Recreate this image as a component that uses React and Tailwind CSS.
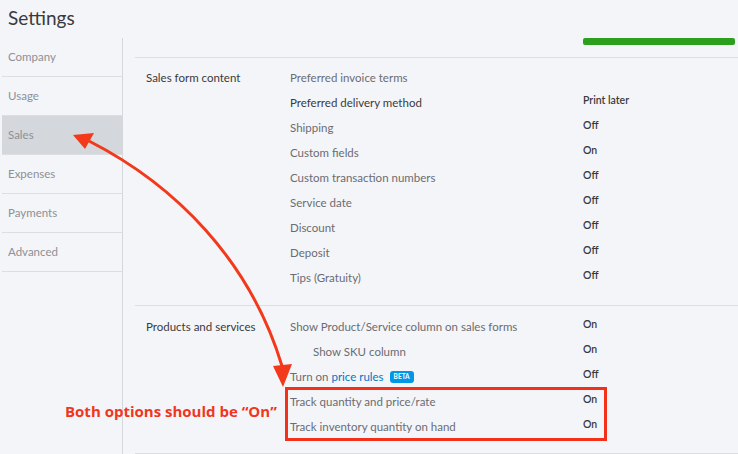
import React from 'react';

const navItems = ['Company', 'Usage', 'Sales', 'Expenses', 'Payments', 'Advanced'];

const salesRows = [
    { label: 'Preferred invoice terms', value: '' },
    { label: 'Preferred delivery method', value: 'Print later', dark: true },
    { label: 'Shipping', value: 'Off' },
    { label: 'Custom fields', value: 'On' },
    { label: 'Custom transaction numbers', value: 'Off' },
    { label: 'Service date', value: 'Off' },
    { label: 'Discount', value: 'Off' },
    { label: 'Deposit', value: 'Off' },
    { label: 'Tips (Gratuity)', value: 'Off' },
];

const Row = ({ children, value, dark }) => (
    <div className="flex items-center h-[25px]">
        <div className={`w-[293px] shrink-0 text-[11.5px] ${dark ? 'text-[#393a3d]' : 'text-[#6b6c72]'}`}>{children}</div>
        <div className="text-[10.5px] font-semibold text-[#393a3d] pb-[3px]">{value}</div>
    </div>
);

const Section = ({ title, children, className }) => (
    <section className={`flex pl-[11px] border-b border-[#dcdee1] ${className}`}>
        <div className="w-[144px] shrink-0 h-[25px] flex items-center text-[11.5px] text-[#393a3d]">{title}</div>
        <div className="flex-1">{children}</div>
    </section>
);

export default function App() {
    return (
        <div className="relative w-[738px] h-[454px] overflow-hidden bg-[#f4f5f8] font-['Lato',sans-serif]">
            {/* Title */}
            <header className="h-[38px] pl-[8px] pt-[5px] text-[19px] leading-[26px] text-[#393a3d]">Settings</header>

            <div className="flex h-[416px]">
                {/* Sidebar */}
                <nav className="w-[123px] shrink-0 border-r border-[#d4d7dc] pl-[2px]">
                    {navItems.map((item) => (
                        <div
                            key={item}
                            className={`h-[39px] flex items-center pl-[6px] border-b border-[#dcdee1] text-[11.5px] text-[#8d9096] ${item === 'Sales' ? 'bg-[#d4d7dc]' : ''}`}
                        >
                            {item}
                        </div>
                    ))}
                </nav>

                {/* Main */}
                <main className="flex-1 pl-[12px]">
                    <div className="h-[20px] border-b border-[#dcdee1] flex justify-end pr-[3px]">
                        <div className="w-[152px] h-[7px] rounded-[2px] bg-[#2ca01c]" />
                    </div>

                    <Section title="Sales form content" className="pt-[7px] pb-[15px]">
                        {salesRows.map((r) => (
                            <Row key={r.label} value={r.value} dark={r.dark}>{r.label}</Row>
                        ))}
                    </Section>

                    <Section title="Products and services" className="pt-[8px] pb-[14px]">
                        <Row value="On">Show Product/Service column on sales forms</Row>
                        <Row value="On"><span className="pl-[23px]">Show SKU column</span></Row>
                        <Row value="Off">
                            <span className="flex items-center">
                                Turn on&nbsp;<span className="text-[#0077c5]">price rules</span>
                                <span className="ml-[6px] rounded-[3px] bg-[#0097e6] px-[4px] py-[1px] text-[6.5px] font-bold text-white leading-[10px]">BETA</span>
                            </span>
                        </Row>
                        <Row value="On">Track quantity and price/rate</Row>
                        <Row value="On">Track inventory quantity on hand</Row>
                    </Section>
                </main>
            </div>

            {/* Annotation overlay */}
            <div className="absolute left-[285px] top-[387px] w-[322px] h-[54px] border-[3px] border-[#f3311a] pointer-events-none" />
            <div className="absolute left-[65px] top-[400px] text-[15px] font-bold text-[#f0361e] whitespace-nowrap font-['Open_Sans',sans-serif]">
                Both options should be “On”
            </div>
            <svg className="absolute inset-0 pointer-events-none" width="738" height="454" viewBox="0 0 738 454">
                <path d="M89 141 C175 185, 250 260, 282 366" fill="none" stroke="#f3391b" strokeWidth="3" />
                <polygon points="73,135 94,133 85,149" fill="#f3391b" />
                <polygon points="283,387 273,366 292,364" fill="#f3391b" />
            </svg>
        </div>
    );
}
